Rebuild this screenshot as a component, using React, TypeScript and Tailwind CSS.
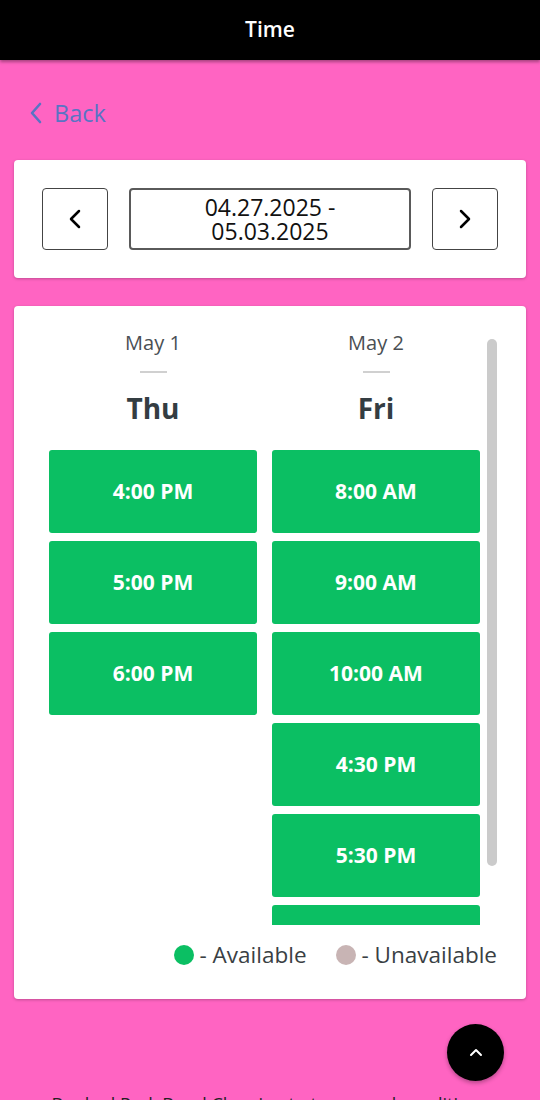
import React from "react";

const thu = ["4:00 PM", "5:00 PM", "6:00 PM"];
const fri = ["8:00 AM", "9:00 AM", "10:00 AM", "4:30 PM", "5:30 PM", "6:30 PM"];

function Column({ date, day, slots }: { date: string; day: string; slots: string[] }) {
  return (
    <div className="flex flex-1 flex-col items-center">
      <div className="h-[26px] shrink-0 text-[20px] leading-[26px] text-[#4a4f54]">{date}</div>
      <div className="mt-[15px] h-[2px] w-[27px] shrink-0 bg-[#d0d0d0]" />
      <div className="mt-[18px] h-[34px] shrink-0 text-[28px] font-bold leading-[34px] text-[#343d42]">{day}</div>
      <div className="mt-[25px] flex w-full shrink-0 flex-col gap-[8px]">
        {slots.map((s) => (
          <div
            key={s}
            className="flex h-[83px] w-full shrink-0 items-center justify-center rounded-[3px] bg-[#0bbf63] text-[21px] font-bold text-white"
          >
            {s}
          </div>
        ))}
      </div>
    </div>
  );
}

export default function App() {
  return (
    <div
      className="relative h-[1100px] overflow-hidden bg-[#ff64c2]"
      style={{ fontFamily: '"Open Sans", "Noto Sans", sans-serif' }}
    >
      <header className="flex h-[60px] items-center justify-center bg-black shadow-[0_2px_3px_rgba(0,0,0,0.35)]">
        <span className="text-[21px] font-semibold text-white">Time</span>
      </header>

      <main className="px-[14px]">
        <div className="mt-[38px] flex h-[30px] items-center pl-[15px]">
          <svg width="14" height="22" viewBox="0 0 14 22" className="text-[#5874c4]">
            <polyline points="11,2 3,11 11,20" fill="none" stroke="currentColor" strokeWidth="2.6" strokeLinecap="round" strokeLinejoin="round" />
          </svg>
          <span className="ml-[11px] text-[23.5px] leading-[30px] text-[#5874c4]">Back</span>
        </div>

        <div className="mt-[32px] rounded-[4px] bg-white px-[28px] py-[28px] shadow-[0_1px_3px_rgba(0,0,0,0.25)]">
          <div className="flex h-[62px] gap-[21px]">
            <button className="flex w-[66px] items-center justify-center rounded-[4px] border border-[#444]">
              <svg width="16" height="22" viewBox="0 0 16 22">
                <polyline points="12,3 4,11 12,19" fill="none" stroke="#000" strokeWidth="2.5" strokeLinecap="round" strokeLinejoin="round" />
              </svg>
            </button>
            <div className="flex flex-1 items-center justify-center rounded-[4px] border-2 border-[#5a5a5a] text-center text-[23px] leading-[24px] text-[#111]">
              04.27.2025 -<br />05.03.2025
            </div>
            <button className="flex w-[66px] items-center justify-center rounded-[4px] border border-[#444]">
              <svg width="16" height="22" viewBox="0 0 16 22">
                <polyline points="4,3 12,11 4,19" fill="none" stroke="#000" strokeWidth="2.5" strokeLinecap="round" strokeLinejoin="round" />
              </svg>
            </button>
          </div>
        </div>

        <div className="mt-[28px] rounded-[4px] bg-white pb-[29px] pl-[35px] pr-[29px] pt-[24px] shadow-[0_1px_3px_rgba(0,0,0,0.25)]">
          <div className="flex h-[595px] gap-[7px] overflow-hidden">
            <div className="flex flex-1 gap-[15px]">
              <Column date="May 1" day="Thu" slots={thu} />
              <Column date="May 2" day="Fri" slots={fri} />
            </div>
            <div className="w-[10px] shrink-0 pt-[9px]">
              <div className="h-[527px] w-[10px] rounded-full bg-[#cbcbcb]" />
            </div>
          </div>
          <div className="mt-[15px] flex h-[30px] items-center justify-end text-[22.5px] text-[#3a3f44]">
            <span className="h-[20px] w-[20px] shrink-0 rounded-full bg-[#0bbf63]" />
            <span className="ml-[6px] whitespace-nowrap">- Available</span>
            <span className="ml-[29px] h-[20px] w-[20px] shrink-0 rounded-full bg-[#c8b4b4]" />
            <span className="ml-[6px] whitespace-nowrap">- Unavailable</span>
          </div>
        </div>

        <p className="mt-[92px] whitespace-nowrap text-center text-[18px] leading-[26px] text-[#222]">
          Booked Park Bond Cleaning to terms and conditions
        </p>
      </main>

      <button className="absolute left-[447px] top-[1024px] flex h-[57px] w-[57px] items-center justify-center rounded-full bg-black shadow-[0_2px_4px_rgba(0,0,0,0.3)]">
        <svg width="14" height="9" viewBox="0 0 14 9">
          <polyline points="2,7 7,2 12,7" fill="none" stroke="#fff" strokeWidth="2" strokeLinecap="round" strokeLinejoin="round" />
        </svg>
      </button>
    </div>
  );
}
